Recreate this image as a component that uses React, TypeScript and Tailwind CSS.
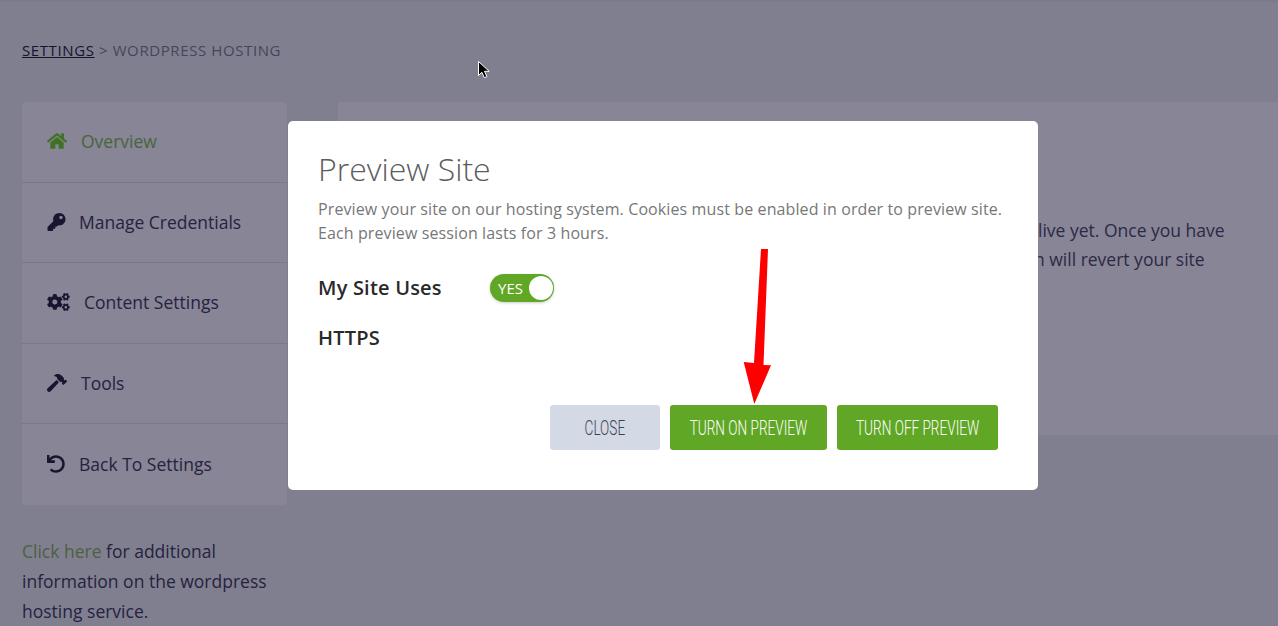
import { ReactNode } from 'react';
import { FaCogs, FaHammer, FaHome, FaKey, FaUndo } from 'react-icons/fa';

// --- Sidebar row ---
interface NavRowProps {
  icon: ReactNode;
  label: string;
  gap: string;
  active?: boolean;
}

const NavRow = ({ icon, label, gap, active = false }: NavRowProps) => (
  <div className={`flex h-[80.5px] items-center border-b border-[#7a788e] pb-px pl-[25px] last:border-b-0 ${gap} ${active ? 'text-[#47653a]' : 'text-[#26223f]'}`}>
    {icon}
    <span className="text-[17.5px]">{label}</span>
  </div>
);

// --- Dialog button ---
const DialogButton = ({ label, width, light = false }: { label: string; width: string; light?: boolean }) => (
  <button className={`flex h-[45px] items-center justify-center rounded-[3px] ${width} ${light ? 'bg-[#d3d9e5] text-[#3f4350]' : 'bg-[#5fa725] text-white'}`}>
    <span className="inline-block scale-x-[0.68] whitespace-nowrap font-['Roboto',sans-serif] text-[20px] font-light">{label}</span>
  </button>
);

export default function App() {
  return (
    <main className="relative h-[626px] w-[1278px] overflow-hidden border-t-2 border-[#7b7a8b] bg-[#807f8f] font-['Open_Sans',sans-serif]">
      {/* Page behind the dialog */}
      <div className="px-[22px] pt-[38px]">
        <p className="text-[15px] leading-5 tracking-[0.6px] text-[#46445c]">
          <span className="text-[#161331] underline">SETTINGS</span> &gt; WORDPRESS HOSTING
        </p>
        <div className="mt-[42px] flex gap-[51px]">
          <aside className="w-[265px] shrink-0">
            <nav className="rounded-[4px] bg-[#878596]">
              <NavRow active label="Overview" gap="gap-[14px]" icon={<FaHome className="h-[18px] w-[20px] text-[#3f7223]" />} />
              <NavRow label="Manage Credentials" gap="gap-[13px]" icon={<FaKey className="h-[18px] w-[19px] text-[#171530]" />} />
              <NavRow label="Content Settings" gap="gap-[14px]" icon={<FaCogs className="h-[18px] w-[23px] text-[#171530]" />} />
              <NavRow label="Tools" gap="gap-[14px]" icon={<FaHammer className="h-[20px] w-[20px] text-[#171530]" />} />
              <NavRow label="Back To Settings" gap="gap-[14px]" icon={<FaUndo className="h-[18px] w-[18px] text-[#171530]" />} />
            </nav>
            <p className="mt-[31px] text-[17.5px] leading-[30px] text-[#26223f]">
              <span className="text-[#4b6140]">Click here</span> for additional information on the wordpress hosting service.
            </p>
          </aside>
          <section className="-mr-[22px] h-[333px] flex-1 bg-[#878596] pl-[640px] pt-[114px]">
            <p className="whitespace-nowrap text-[17.5px] leading-[29px] text-[#2d2945]">
              <span className="block pl-[60px]">live yet. Once you have</span>
              <span className="block pl-[56px]">n will revert your site</span>
            </p>
          </section>
        </div>
      </div>

      {/* Mouse pointer */}
      <svg className="absolute left-[477px] top-[58px]" width="14" height="20" viewBox="0 0 14 20">
        <path d="M1.5 1.5v14l3.4-3.2 2.4 5.4 2.6-1.1-2.4-5.3h4.700z" fill="#000" stroke="#fff" strokeWidth="1" />
      </svg>

      {/* Dialog */}
      <div className="absolute left-[288px] top-[119px] flex h-[369px] w-[750px] flex-col rounded-[5px] bg-white pl-[30px] pr-[40px] pt-[27px]">
        <h2 className="text-[32px] font-light leading-[42px] text-[#5c5c5c]">Preview Site</h2>
        <p className="mt-[7px] w-[700px] text-[16px] leading-[24px] tracking-[0.11px] text-[#777]">
          Preview your site on our hosting system. Cookies must be enabled in order to preview site.
          <br />
          Each preview session lasts for 3 hours.
        </p>
        <div className="mt-[29px] flex items-center">
          <span className="w-[172px] text-[20px] font-semibold leading-[28px] tracking-[0.2px] text-[#2a2a2a]">My Site Uses</span>
          <div className="flex h-[28px] w-[64px] items-center justify-between rounded-full bg-[#5fa725] pl-[8px] pr-px shadow-[0_1px_3px_rgba(0,0,0,0.2)]">
            <span className="text-[15px] leading-none text-white">YES</span>
            <span className="h-[24px] w-[24px] rounded-full bg-white" />
          </div>
        </div>
        <p className="mt-[22px] text-[20px] font-semibold leading-[28px] tracking-[0.2px] text-[#2a2a2a]">HTTPS</p>
        <div className="mt-[53px] flex justify-end gap-[10px]">
          <DialogButton light label="CLOSE" width="w-[110px]" />
          <DialogButton label="TURN ON PREVIEW" width="w-[157px]" />
          <DialogButton label="TURN OFF PREVIEW" width="w-[161px]" />
        </div>
      </div>

      {/* Red annotation arrow */}
      <svg className="absolute left-[740px] top-[245px]" width="36" height="160" viewBox="0 0 36 160">
        <path d="M21 2h7l-4.500 116 7.500 0.300L14.300 157 3.700 115l10.300 1z" fill="#ff0000" />
      </svg>
    </main>
  );
}
